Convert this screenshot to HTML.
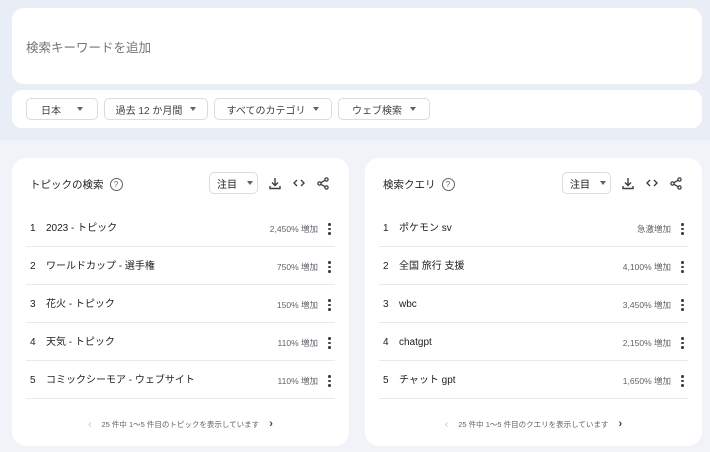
<!DOCTYPE html><html><head><meta charset="utf-8"><style>
*{box-sizing:border-box;margin:0;padding:0}
body{width:710px;height:452px;background:#f1f3f8;font-family:"Liberation Sans","Noto Sans CJK JP",sans-serif;color:#202124;position:relative;overflow:hidden}
.top{position:absolute;left:0;top:0;width:710px;height:140px;background:#e9eef6}
.box{position:absolute;background:#fff;border-radius:12px}
.chip{position:absolute;top:98px;height:22px;border:1px solid #dadce0;border-radius:5px;font-size:10px;color:#3c4043;display:flex;align-items:center;justify-content:center;gap:8px}
.tri{width:0;height:0;border-left:3.5px solid transparent;border-right:3.5px solid transparent;border-top:4px solid #5f6368}
.card{position:absolute;top:158px;width:337px;height:288px;background:#fff;border-radius:14px}
.ttl{position:absolute;left:18px;top:19px;font-size:10.5px;display:flex;align-items:center;gap:6px}
.q{width:13px;height:13px;border:1.3px solid #5f6368;border-radius:50%;font-size:8px;display:flex;align-items:center;justify-content:center;color:#5f6368}
.sel{position:absolute;top:14px;width:49px;height:22px;border:1px solid #dadce0;border-radius:5px;font-size:10px;display:flex;align-items:center;padding-left:7px;gap:10px}
.ic{position:absolute;top:19px}
.row{position:absolute;left:14px;right:14px;height:38px;border-bottom:1px solid #e8eaed;font-size:10px;line-height:14px;padding-top:13px;white-space:nowrap}
.row .n{display:inline-block;width:16px;padding-left:4px}
.row .t{display:inline-block;padding-left:4px}
.row .v{position:absolute;right:17px;top:13px;font-size:8.5px;color:#5f6368}
.dots{position:absolute;right:4px;top:14px;width:3px;display:flex;flex-direction:column;gap:2px}
.dots i{width:2.5px;height:2.5px;background:#3c4043;border-radius:50%}
.ft{position:absolute;top:260px;left:0;right:0;font-size:7.5px;color:#5f6368;display:flex;justify-content:center;align-items:center;gap:10px}
</style></head><body>
<div class="top"></div>
<div class="box" style="left:12px;top:8px;width:690px;height:76px"><div style="position:absolute;left:14px;top:29px;font-size:12.5px;color:#70757a">検索キーワードを追加</div></div>
<div class="box" style="left:12px;top:90px;width:690px;height:38px;border-radius:10px"></div>
<div class="chip" style="left:26px;width:72px">日本<span class="tri" style="margin-left:8px"></span></div>
<div class="chip" style="left:104px;width:104px">過去 12 か月間<span class="tri"></span></div>
<div class="chip" style="left:214px;width:118px">すべてのカテゴリ<span class="tri"></span></div>
<div class="chip" style="left:338px;width:92px">ウェブ検索<span class="tri"></span></div>

<div class="card" style="left:12px">
<div class="ttl">トピックの検索<span class="q">?</span></div>
<div class="sel" style="left:197px">注目<span class="tri"></span></div>
<svg class="ic" style="left:257px" width="12" height="13" viewBox="0 0 12 13" fill="none" stroke="#3c4043" stroke-width="1.4"><path d="M6 1v7M3 5.5l3 3 3-3M1 9v2.5h10V9"/></svg>
<svg class="ic" style="left:281px" width="12" height="12" viewBox="0 0 12 12" fill="none" stroke="#3c4043" stroke-width="1.4"><path d="M4 3L1 6l3 3M8 3l3 3-3 3"/></svg>
<svg class="ic" style="left:305px" width="12" height="13" viewBox="0 0 12 13" fill="none" stroke="#3c4043" stroke-width="1.3"><circle cx="9.5" cy="2.5" r="1.6"/><circle cx="2.5" cy="6.5" r="1.6"/><circle cx="9.5" cy="10.5" r="1.6"/><path d="M4 5.7l4-2.4M4 7.3l4 2.4"/></svg>
<div class="row" style="top:51px"><span class="n">1</span><span class="t">2023 - トピック</span><span class="v">2,450% 増加</span><span class="dots"><i></i><i></i><i></i></span></div>
<div class="row" style="top:89px"><span class="n">2</span><span class="t">ワールドカップ - 選手権</span><span class="v">750% 増加</span><span class="dots"><i></i><i></i><i></i></span></div>
<div class="row" style="top:127px"><span class="n">3</span><span class="t">花火 - トピック</span><span class="v">150% 増加</span><span class="dots"><i></i><i></i><i></i></span></div>
<div class="row" style="top:165px"><span class="n">4</span><span class="t">天気 - トピック</span><span class="v">110% 増加</span><span class="dots"><i></i><i></i><i></i></span></div>
<div class="row" style="top:203px"><span class="n">5</span><span class="t">コミックシーモア - ウェブサイト</span><span class="v">110% 増加</span><span class="dots"><i></i><i></i><i></i></span></div>
<div class="ft"><span style="color:#bbb;font-size:10px">‹</span>25 件中 1～5 件目のトピックを表示しています<span style="color:#3c4043;font-size:11px;font-weight:bold">›</span></div>
</div>

<div class="card" style="left:365px">
<div class="ttl">検索クエリ<span class="q">?</span></div>
<div class="sel" style="left:197px">注目<span class="tri"></span></div>
<svg class="ic" style="left:257px" width="12" height="13" viewBox="0 0 12 13" fill="none" stroke="#3c4043" stroke-width="1.4"><path d="M6 1v7M3 5.5l3 3 3-3M1 9v2.5h10V9"/></svg>
<svg class="ic" style="left:281px" width="12" height="12" viewBox="0 0 12 12" fill="none" stroke="#3c4043" stroke-width="1.4"><path d="M4 3L1 6l3 3M8 3l3 3-3 3"/></svg>
<svg class="ic" style="left:305px" width="12" height="13" viewBox="0 0 12 13" fill="none" stroke="#3c4043" stroke-width="1.3"><circle cx="9.5" cy="2.5" r="1.6"/><circle cx="2.5" cy="6.5" r="1.6"/><circle cx="9.5" cy="10.5" r="1.6"/><path d="M4 5.7l4-2.4M4 7.3l4 2.4"/></svg>
<div class="row" style="top:51px"><span class="n">1</span><span class="t">ポケモン sv</span><span class="v">急激増加</span><span class="dots"><i></i><i></i><i></i></span></div>
<div class="row" style="top:89px"><span class="n">2</span><span class="t">全国 旅行 支援</span><span class="v">4,100% 増加</span><span class="dots"><i></i><i></i><i></i></span></div>
<div class="row" style="top:127px"><span class="n">3</span><span class="t">wbc</span><span class="v">3,450% 増加</span><span class="dots"><i></i><i></i><i></i></span></div>
<div class="row" style="top:165px"><span class="n">4</span><span class="t">chatgpt</span><span class="v">2,150% 増加</span><span class="dots"><i></i><i></i><i></i></span></div>
<div class="row" style="top:203px"><span class="n">5</span><span class="t">チャット gpt</span><span class="v">1,650% 増加</span><span class="dots"><i></i><i></i><i></i></span></div>
<div class="ft"><span style="color:#bbb;font-size:10px">‹</span>25 件中 1～5 件目のクエリを表示しています<span style="color:#3c4043;font-size:11px;font-weight:bold">›</span></div>
</div>
</body></html>
